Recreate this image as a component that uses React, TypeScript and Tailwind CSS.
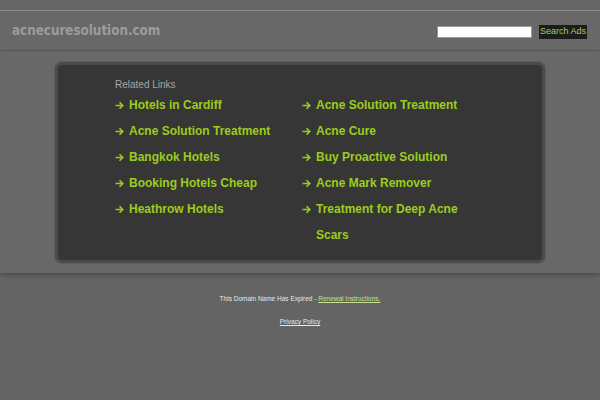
import React from 'react';

const left = ['Hotels in Cardiff', 'Acne Solution Treatment', 'Bangkok Hotels', 'Booking Hotels Cheap', 'Heathrow Hotels'];
const right = ['Acne Solution Treatment', 'Acne Cure', 'Buy Proactive Solution', 'Acne Mark Remover', 'Treatment for Deep Acne Scars'];

const Arrow = () => (
  <svg width="9" height="9" viewBox="0 0 9 9" className="mt-[9px] shrink-0" fill="none" stroke="currentColor" strokeWidth="1.6">
    <path d="M0.5 4.5h7M4.5 1.2l3.3 3.3-3.3 3.3" />
  </svg>
);

const LinkItem = ({ label }: { label: string }) => (
  <li className="flex items-start gap-[5px] leading-[26px]">
    <Arrow />
    <span className="w-[160px]">{label}</span>
  </li>
);

export default function App() {
  return (
    <div className="min-h-[400px] w-[600px] bg-[#646464] font-['Liberation_Sans',Arial,sans-serif]">
      {/* Header */}
      <div className="h-[10px] bg-[#666666]" />
      <div className="flex h-[41px] items-center justify-between border-t border-b border-t-[#8c8c8c] border-b-[#585858] bg-[#686868] pl-[12px] pr-[13px]">
        <div className="font-['DejaVu_Sans_Condensed','DejaVu_Sans',sans-serif] text-[13.3px] font-bold text-[#9c9c9c]">acnecuresolution.com</div>
        <div className="mt-[2px] flex items-center gap-[7px]">
          <div className="h-[12px] w-[95px] border border-[#999] bg-white" />
          <div className="flex h-[14px] w-[48px] items-center justify-center whitespace-nowrap bg-[#1c1c1c] text-[9px] text-[#a8cc5c]">Search Ads</div>
        </div>
      </div>

      {/* Body */}
      <div className="h-[222px] bg-[#686868] px-[55px] pt-[11px] shadow-[0_2px_4px_rgba(0,0,0,0.25)]">
        <div className="h-[201px] rounded-[7px] border-[3px] border-[#4b4b4b] bg-[#363636] pl-[57px] pt-[14px] shadow-[0_0_0_1px_#5e5e5e]">
          <div className="mb-[1px] text-[10px] leading-[12px] text-[#a6a6a6]">Related Links</div>
          <div className="flex gap-[19px] text-[12px] font-bold text-[#9ccc1e]">
            <ul className="w-[168px]">
              {left.map(l => <LinkItem key={l} label={l} />)}
            </ul>
            <ul className="w-[200px]">
              {right.map(l => <LinkItem key={l} label={l} />)}
            </ul>
          </div>
        </div>
      </div>

      {/* Footer */}
      <div className="flex flex-col items-center pt-[21px] text-[6.5px] text-[#e8e8e8]">
        <div className="leading-[10px]">
          This Domain Name Has Expired - <span className="text-[#c8e08a] underline">Renewal Instructions.</span>
        </div>
        <div className="mt-[13px] leading-[10px] underline">Privacy Policy</div>
      </div>
    </div>
  );
}
